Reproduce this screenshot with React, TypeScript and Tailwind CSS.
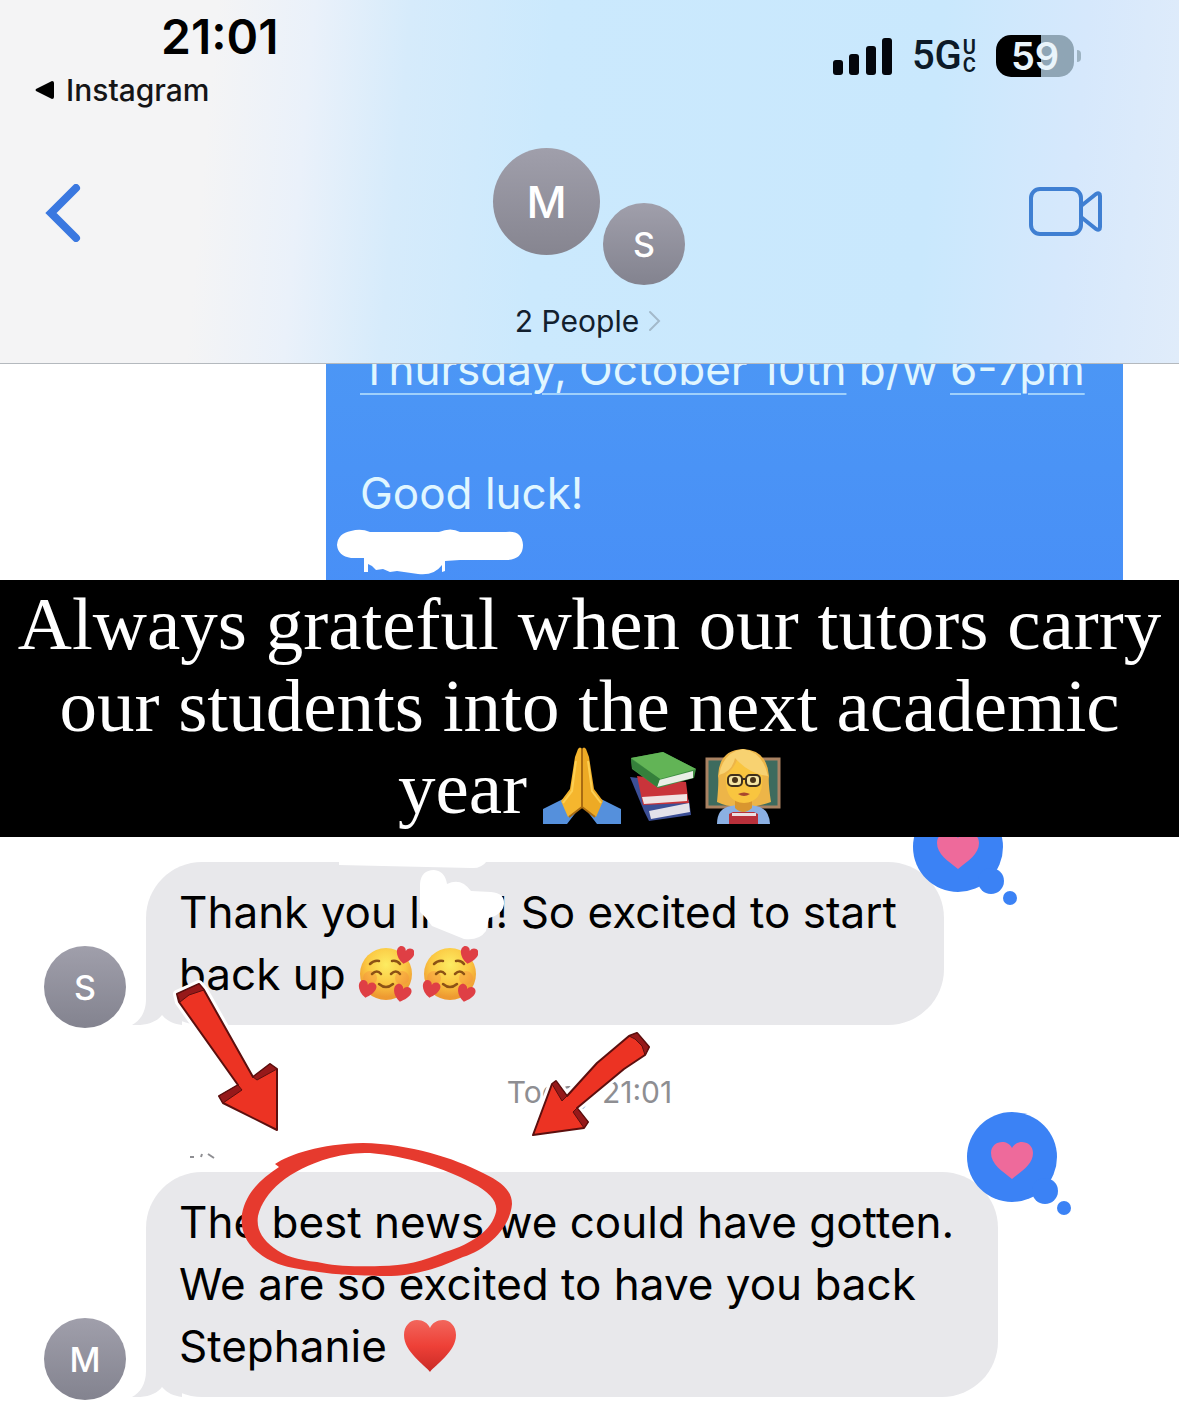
import type { ReactNode } from 'react'

function Avatar({ letter, large = false }: { letter: string; large?: boolean }) {
  return (
    <span
      className={
        large
          ? 'flex size-[107px] shrink-0 items-center justify-center rounded-full bg-linear-to-b from-[#a09fab] to-[#868590] text-[44px] font-medium text-white'
          : 'flex size-[82px] shrink-0 items-center justify-center rounded-full bg-linear-to-b from-[#a09fab] to-[#83838f] text-[34px] font-medium text-white'
      }
    >
      {letter}
    </span>
  )
}

function StatusBar() {
  return (
    <div className="flex items-start justify-between pl-[35px] pr-[98px]">
      <div>
        <p className="pl-[126px] pt-2 text-[48px] leading-[58px] font-semibold text-black">21:01</p>
        <a href="#instagram" className="flex items-center gap-3 text-[30px] leading-[48px] font-medium text-[#151517]">
          <svg className="h-5 w-[19px]" viewBox="0 0 19 20" fill="#000">
            <path d="M1 9 17 1q2 0 2 2v14q0 2-2 2L1 11q-1-1 0-2Z" />
          </svg>
          Instagram
        </a>
      </div>
      <div className="flex items-center pt-8">
        <svg className="h-[42px] w-[59px]" viewBox="0 0 59 42" fill="#04060c">
          <rect x="0" y="25" width="10" height="15" rx="3" />
          <rect x="16" y="19" width="10" height="21" rx="3" />
          <rect x="33" y="11" width="10" height="29" rx="3" />
          <rect x="49" y="3" width="10" height="37" rx="3" />
        </svg>
        <span className="ml-5 flex items-center gap-px font-[Roboto] text-[40px] leading-[48px] font-medium text-[#0c1a28]">
          5G
          <span className="flex flex-col text-[20px] leading-[18px] font-semibold">
            <span>U</span>
            <span>C</span>
          </span>
        </span>
        <span className="ml-5 flex h-[42px] w-[78px] items-center justify-center rounded-[15px] bg-linear-to-r from-black from-58% to-[#8fa5b5] to-58% text-[38px] font-semibold text-[#e9f4fb]">
          59
        </span>
        <span className="ml-[3px] h-3 w-1 rounded-r-full bg-[#9db3c2]" />
      </div>
    </div>
  )
}

function Header() {
  return (
    <header className="relative z-10 h-[364px] border-b border-[#b4b9be] bg-[linear-gradient(95deg,#f4f4f5_18%,#eaf1fa_26%,#d6ebfb_34%,#cbe9fd_46%,#c9e8fd_78%,#d6e8fc_90%,#e0ecfa_100%)]">
      <StatusBar />
      <div className="grid grid-cols-[1fr_auto_1fr] items-start pt-[34px] pr-[76px] pl-[45px]">
        <button type="button" aria-label="Back" className="mt-9 w-9">
          <svg className="h-[58px] w-9" viewBox="0 0 36 58" fill="none" stroke="#3a78e0" strokeWidth="8" strokeLinecap="round">
            <path d="M31 4 6 29l25 25" />
          </svg>
        </button>
        <button type="button" className="ml-[30px] flex flex-col items-center">
          <span className="flex h-[137px] items-start gap-[3px]">
            <Avatar letter="M" large />
            <span className="self-end">
              <Avatar letter="S" />
            </span>
          </span>
          <span className="mt-4 flex items-center gap-2 text-[30px] leading-10 text-[#12202e]">
            2 People
            <svg className="h-6 w-4" viewBox="0 0 16 24" fill="none" stroke="#a3b9ca" strokeWidth="2" strokeLinecap="round">
              <path d="m3 3 9 9-9 9" />
            </svg>
          </span>
        </button>
        <button type="button" aria-label="FaceTime" className="mt-[38px] w-[76px] justify-self-end">
          <svg className="h-[52px] w-[76px]" viewBox="0 0 76 52" fill="none" stroke="#3f7fd2" strokeWidth="4" strokeLinejoin="round">
            <rect x="4" y="3" width="50" height="45" rx="9" />
            <path d="M54 20 69 8q4-2 4 2v31q0 4-4 2L54 31" />
          </svg>
        </button>
      </div>
    </header>
  )
}

function OutgoingMessage() {
  return (
    <section className="h-[216px] overflow-hidden pr-14 pl-[326px]">
      <div className="relative -mt-[26px] h-[260px] bg-linear-to-b from-[#4c97f5] to-[#488ff7] px-[34px] text-[44px] leading-[62px] whitespace-nowrap text-[#e0f6ff]">
        <p>
          <a href="#date" className="underline decoration-2 decoration-[#9fd0fb] underline-offset-8">Thursday, October 10th</a>
          {' b/w '}
          <a href="#time" className="underline decoration-2 decoration-[#9fd0fb] underline-offset-8">6-7pm</a>
        </p>
        <p className="mt-[62px]">Good luck!</p>
        <svg className="absolute top-[190px] left-[10px] h-12 w-[190px]" viewBox="0 0 190 48" fill="#fff">
          <path d="M15 3Q25 0 34 4H103Q115-1 124 4L170 4Q186 2 187 17Q187 31 171 32L124 32 109 33V43L106 44V37Q98 48 82 46L61 43 54 44 47 41 40 42 36 38 32 36V44H28V30L15 30Q2 28 1 17Q2 5 15 3Z" />
        </svg>
      </div>
    </section>
  )
}

function PrayEmoji() {
  return (
    <svg role="img" aria-label="folded hands" className="size-[78px]" viewBox="0 0 78 78">
      <path d="M0 62 20 52 34 64 24 77H0ZM78 62 58 52 44 64 54 77h24Z" fill="#5590dc" />
      <path d="M18 54 27 42 32 10 35 2Q37-1 39 2V60L25 70Z" fill="#f5b62e" />
      <path d="M60 54 51 42 46 10 43 2Q41-1 39 2V60L53 70Z" fill="#edaa25" />
      <path d="M39 2V60L26 70M39 60l13 10" fill="none" stroke="#a96b12" strokeWidth="2" />
      <path d="M33 14 29 44 20 56M45 14l4 30 9 12" fill="none" stroke="#fdcf52" strokeWidth="2" />
    </svg>
  )
}

function BooksEmoji() {
  return (
    <svg role="img" aria-label="books" className="h-[72px] w-[68px]" viewBox="0 0 68 72">
      <path d="M1 27 10 28 60 50 62 65 20 71 15 61Z" fill="#3c4f96" />
      <path d="M20 61 60 53 61 62 22 69Z" fill="#e4e2ea" />
      <path d="M8 26 57 32 59 48 60 53 14 55Z" fill="#c9343a" />
      <path d="M13 47 58 44V51L15 54Z" fill="#f0e3e3" />
      <path d="M2 8 34 2 67 19 65 28 29 38 3 19Z" fill="#3f8f43" />
      <path d="M2 8 34 2 67 19 31 29Z" fill="#62b456" />
      <path d="M30 30 64 21V28L28 37Z" fill="#e9efe6" />
      <path d="M2 9 31 29 28 37 3 18Z" fill="#35803b" />
    </svg>
  )
}

function TeacherEmoji() {
  return (
    <svg role="img" aria-label="woman teacher" className="size-[76px]" viewBox="0 0 76 76">
      <rect x="2" y="11" width="72" height="48" fill="#3d6b5e" stroke="#a98262" strokeWidth="3" />
      <path d="M12 54Q14 33 13 28 14 2 38 1 62 2 64 28 63 35 66 54 50 60 38 58 25 60 12 54Z" fill="#edb548" />
      <path d="M12 76Q12 60 26 58L38 56 51 58Q64 60 65 76Z" fill="#8bb0e3" />
      <path d="M30 49h17v11q-9 8-17 0Z" fill="#d9962f" />
      <path d="M21 27Q29 20 32 12 42 22 57 24 60 54 39 55 19 54 21 27Z" fill="#f9c53f" />
      <path d="M14 27Q18 4 38 1 58 4 63 28 44 26 30 10 27 24 14 27Z" fill="#f8d271" />
      <g fill="#f5e5a3" stroke="#3f301c" strokeWidth="2">
        <rect x="23" y="27" width="14" height="11" rx="4" />
        <rect x="41" y="27" width="14" height="11" rx="4" />
        <path d="M37 31h4" />
      </g>
      <circle cx="30" cy="32" r="3" fill="#4b3518" />
      <circle cx="48" cy="32" r="3" fill="#4b3518" />
      <path d="M33 46q6 4 12 0-6-3-12 0Z" fill="#a8472d" />
      <path d="M24 66 28 64H49L53 66V76H24Z" fill="#b8303a" />
      <path d="M27 65H51V68H27Z" fill="#eadfe2" />
    </svg>
  )
}

function LoveFaceEmoji() {
  const heart = 'M0 9C-9 4-11-5-6-8-3-9 0-7 0-4 2-9 9-8 9-3 9 2 4 6 0 9Z'
  return (
    <svg role="img" aria-label="smiling face with hearts" className="size-14" viewBox="0 0 56 56">
      <defs>
        <radialGradient id="face" cx="50%" cy="32%" r="62%">
          <stop offset="0" stopColor="#fdec62" />
          <stop offset="0.6" stopColor="#fbc843" />
          <stop offset="1" stopColor="#ee9a31" />
        </radialGradient>
      </defs>
      <circle cx="28" cy="28" r="26" fill="url(#face)" />
      <circle cx="12" cy="32" r="7" fill="#f58b3f" opacity="0.4" />
      <circle cx="44" cy="32" r="7" fill="#f58b3f" opacity="0.4" />
      <g fill="none" stroke="#8c5215" strokeWidth="2.5" strokeLinecap="round">
        <path d="M12 18q4-4 9-3M34 15q5-1 8 3" />
        <path d="M14 28q5-5 9 0M33 28q5-5 9 0" />
        <path d="M21 38q7 6 14 0" />
      </g>
      <g fill="#df3f45">
        <path d={heart} transform="translate(47 9) rotate(10)" />
        <path d={heart} transform="translate(9 43) rotate(10)" />
        <path d={heart} transform="translate(44 47) rotate(14)" />
      </g>
    </svg>
  )
}

function RedHeartEmoji() {
  return (
    <svg role="img" aria-label="red heart" className="size-[54px]" viewBox="0 0 54 54">
      <defs>
        <linearGradient id="red-heart" x1="0" y1="0" x2="0" y2="1">
          <stop offset="0" stopColor="#f2665c" />
          <stop offset="0.5" stopColor="#ee4037" />
          <stop offset="1" stopColor="#c92a26" />
        </linearGradient>
      </defs>
      <path d="M27 53C22 46 1 33 1 16 1 7 7 1 14 1 20 1 25 4 27 9 29 4 34 1 40 1 47 1 53 7 53 16 53 33 32 46 27 53Z" fill="url(#red-heart)" />
    </svg>
  )
}

function Banner() {
  return (
    <section className="relative z-10 bg-black pt-[3px] pb-2 text-center font-['Liberation_Serif',serif] text-[75px] leading-[82px] text-white">
      <p className="whitespace-nowrap">Always grateful when our tutors carry</p>
      <p className="whitespace-nowrap">our students into the next academic</p>
      <p className="flex items-start justify-center">
        year
        <span className="ml-4 flex items-center gap-2">
          <PrayEmoji />
          <BooksEmoji />
          <TeacherEmoji />
        </span>
      </p>
    </section>
  )
}

function HeartReaction() {
  return (
    <svg role="img" aria-label="Loved" className="absolute -top-[60px] -right-[75px] h-[106px] w-[106px]" viewBox="0 0 106 106">
      <g fill="#3b82f5">
        <circle cx="45" cy="45" r="45" />
        <circle cx="78" cy="79" r="13" />
        <circle cx="97" cy="96" r="7" />
      </g>
      <path d="M45 67C35 59 24 52 24 41 24 29 40 26 45 36 50 26 66 29 66 41 66 52 55 59 45 67Z" fill="#ee6a9b" />
    </svg>
  )
}

function IncomingMessage({ letter, children }: { letter: string; children: ReactNode }) {
  return (
    <div className="flex items-end gap-5 pl-11">
      <Avatar letter={letter} />
      <div className="relative mb-[3px] rounded-[56px] bg-[#e8e8eb] pt-[19px] pb-5 pl-[33px] text-[44px] leading-[62px] whitespace-nowrap text-black">
        <svg className="absolute bottom-0 -left-[14px] h-[60px] w-[50px]" viewBox="0 0 50 60" fill="#e8e8eb">
          <path d="M14 0V34C14 47 8 56 0 60 14 61 25 57 30 50 35 56 42 59 50 60V0Z" />
        </svg>
        <div className="relative">{children}</div>
        <HeartReaction />
      </div>
    </div>
  )
}

// Hand-drawn marks over the conversation
function Annotations() {
  return (
    <svg className="pointer-events-none absolute top-0 left-0 h-[460px] w-[680px]" viewBox="0 837 680 460">
      <g fill="#e93323" stroke="#fff" strokeWidth="8" strokeLinejoin="round">
        <path d="M177 994 199 984 204 990 253 1077 270 1064 277 1069V1130L223 1103 219 1096 238 1085 179 1002Z" />
        <path d="M533 1135 552 1084 556 1081 567 1096 597 1063 629 1036 637 1033 649 1047 645 1055 624 1069 577 1108 588 1122 584 1128Z" />
      </g>
      <g fill="#ec3323" stroke="#5c0f0e" strokeWidth="2" strokeLinejoin="round">
        <path d="M177 994 199 984 204 990 253 1077 270 1064 277 1069V1130L223 1103 219 1096 238 1085 179 1002Z" />
        <path d="M533 1135 552 1084 556 1081 567 1096 597 1063 629 1036 637 1033 649 1047 645 1055 624 1069 577 1108 588 1122 584 1128Z" />
      </g>
      <g fill="#96191a" stroke="#5c0f0e" strokeWidth="1" strokeLinejoin="round">
        <path d="M177 994 199 984 204 990 189 995 180 1002ZM219 1096 238 1085 242 1090 223 1103ZM253 1077 270 1064 277 1069 257 1080Z" />
        <path d="M552 1084 556 1081 567 1096 562 1101ZM629 1036 637 1033 649 1047 645 1055 642 1046 635 1039ZM577 1108 588 1122 584 1128 573 1112Z" />
      </g>
      <path
        fill="#e63a2e"
        fillRule="evenodd"
        d="M275 1164C290 1154 320 1144 363 1143 410 1144 454 1158 483 1173 504 1183 512 1192 512 1204 510 1228 488 1249 463 1257 436 1269 412 1277 380 1276 350 1275 335 1275 313 1271 286 1268 272 1263 260 1254 246 1244 240 1230 242 1214 246 1192 262 1178 279 1167ZM330 1158C345 1154 356 1153 370 1153 405 1156 445 1168 472 1183 490 1192 498 1202 496 1212 492 1230 472 1244 445 1252 423 1261 405 1266 380 1266 350 1267 335 1266 317 1262 298 1260 284 1256 274 1248 262 1239 256 1229 258 1216 264 1192 288 1170 330 1158Z"
      />
    </svg>
  )
}

export default function App() {
  return (
    <main className="min-h-[1425px] overflow-hidden bg-white font-[Inter,sans-serif]">
      <Header />
      <OutgoingMessage />
      <Banner />
      <section className="relative pt-[25px]">
        <IncomingMessage letter="S">
          <p className="pr-[47px]">
            Thank you li<span className="inline-block w-[39px]" />n! So excited to start
          </p>
          <p className="flex items-center gap-2">
            back up
            <span className="ml-1 flex gap-2">
              <LoveFaceEmoji />
              <LoveFaceEmoji />
            </span>
          </p>
          <svg className="absolute -top-5 left-[160px] h-[80px] w-[170px]" viewBox="0 0 170 80" fill="#fff">
            <path d="M0 0H148Q142 8 132 7L0 4Z" />
            <path d="M81 23Q82 9 95 9 106 10 108 23 122 16 132 30L152 31Q166 32 165 43 164 53 150 57L147 70Q140 80 125 78L93 65 86 56 81 51Z" />
          </svg>
        </IncomingMessage>
        <div className="h-36 pt-11">
          <time className="block text-center text-[30px] leading-10 text-[#8e8e92]">Today 21:01</time>
          <svg className="mt-10 ml-[188px] h-2 w-8" viewBox="0 0 32 8" fill="none" stroke="#8e8e92" strokeWidth="2">
            <path d="M2 5h4M13 5l1-3M20 2l6 4" />
          </svg>
        </div>
        <IncomingMessage letter="M">
          <p className="pr-[44px]">The best news we could have gotten.</p>
          <p>We are so excited to have you back</p>
          <p className="flex items-center gap-4">
            Stephanie
            <RedHeartEmoji />
          </p>
        </IncomingMessage>
        <Annotations />
      </section>
    </main>
  )
}
